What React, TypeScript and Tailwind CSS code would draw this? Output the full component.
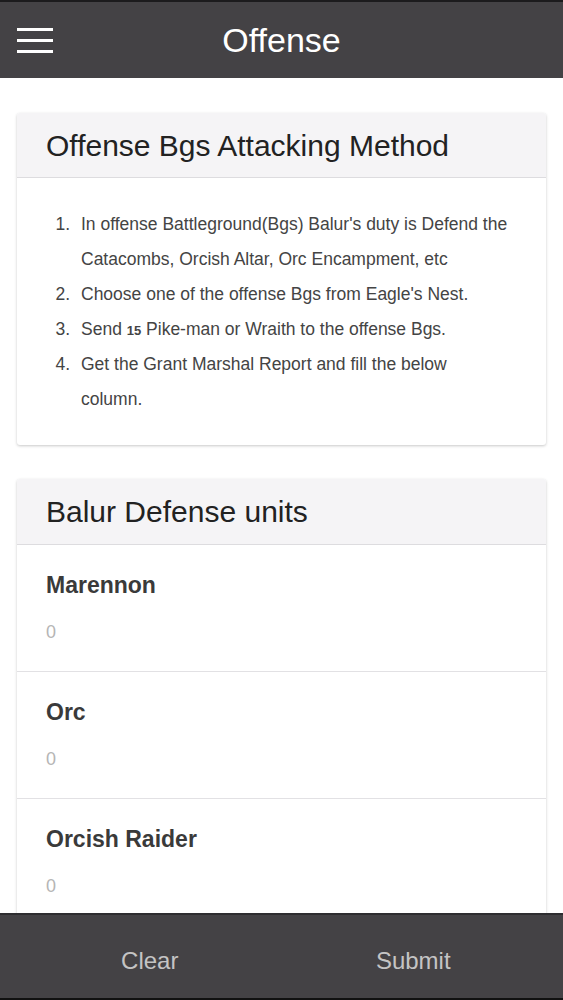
import React from 'react';

const units = ['Marennon', 'Orc', 'Orcish Raider'];

export default function App() {
    return (
        <div className="flex h-[1000px] w-[563px] flex-col overflow-hidden bg-white font-['Liberation_Sans',Arial,sans-serif]">
            {/* top bar */}
            <header className="flex h-[78px] shrink-0 items-center border-t-2 border-[#1c1b1d] bg-[#444245]">
                <div className="ml-[17px] flex w-[36px] flex-col gap-[8px]">
                    <span className="block h-[3px] w-full bg-white" />
                    <span className="block h-[3px] w-full bg-white" />
                    <span className="block h-[3px] w-full bg-white" />
                </div>
                <h1 className="flex-1 pr-[53px] text-center text-[34px] text-white">Offense</h1>
            </header>

            <main className="min-h-0 flex-1 overflow-hidden px-[17px] pt-[35px]">
                <section className="rounded-[3px] bg-white shadow-[0_1px_3px_rgba(0,0,0,0.22)]">
                    <div className="flex h-[65px] items-center rounded-t-[3px] border-b border-[#dddcdf] bg-[#f5f4f6] px-[29px]">
                        <h2 className="text-[30px] text-[#222]">Offense Bgs Attacking Method</h2>
                    </div>
                    <ol className="list-decimal pb-[28px] pl-[58px] pr-[24px] pt-[29px] text-[17.5px] leading-[35px] text-[#444]">
                        <li className="pl-[6px]">In offense Battleground(Bgs) Balur's duty is Defend the Catacombs, Orcish Altar, Orc Encampment, etc</li>
                        <li className="pl-[6px]">Choose one of the offense Bgs from Eagle's Nest.</li>
                        <li className="pl-[6px]">
                            Send <b className="text-[13px] leading-none">15</b> Pike-man or Wraith to the offense Bgs.
                        </li>
                        <li className="pl-[6px] pr-[60px]">Get the Grant Marshal Report and fill the below column.</li>
                    </ol>
                </section>

                <section className="mt-[34px] rounded-[3px] bg-white shadow-[0_1px_3px_rgba(0,0,0,0.22)]">
                    <div className="flex h-[66px] items-center rounded-t-[3px] border-b border-[#dddcdf] bg-[#f5f4f6] px-[29px]">
                        <h2 className="text-[30px] text-[#222]">Balur Defense units</h2>
                    </div>
                    {units.map(u => (
                        <div key={u} className="border-b border-[#e2e1e4] px-[29px] pb-[27px] pt-[26px]">
                            <div className="text-[23px] font-bold leading-[28px] text-[#3a3a3a]">{u}</div>
                            <div className="mt-[21px] text-[18px] leading-[24px] text-[#b5b5b5]">0</div>
                        </div>
                    ))}
                </section>
            </main>

            {/* bottom bar */}
            <footer className="flex h-[87px] shrink-0 items-center border-b-2 border-t-2 border-b-[#111] border-t-[#2e2d30] bg-[#444245] px-[18px] pt-[8px]">
                <button className="flex-1 text-center text-[24px] text-[#c4c4c4]">Clear</button>
                <button className="flex-1 text-center text-[24px] text-[#c4c4c4]">Submit</button>
            </footer>
        </div>
    );
}
